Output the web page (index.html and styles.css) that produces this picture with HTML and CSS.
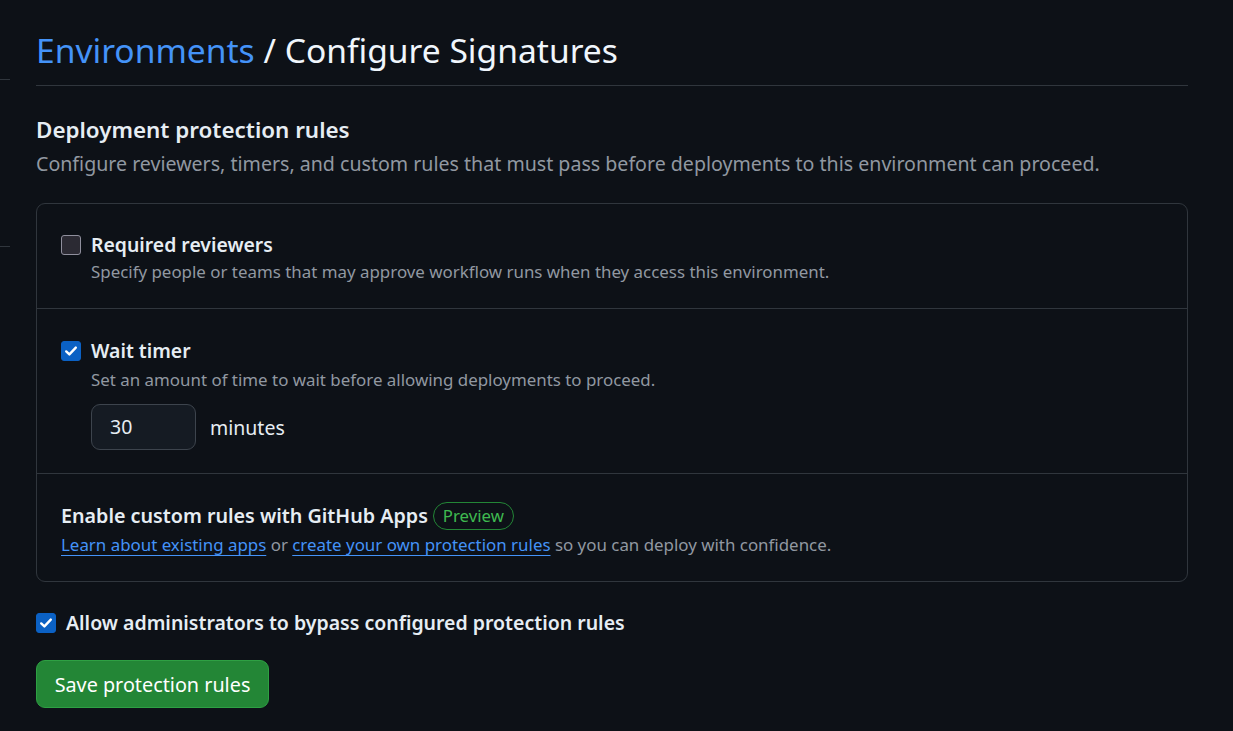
FILE: index.html
```html
<!DOCTYPE html>
<html lang="en">
<head>
<meta charset="utf-8">
<title>Configure Signatures</title>
<link rel="stylesheet" href="styles.css">
</head>
<body>
<div class="layout">
  <aside class="sidebar">
    <div class="side-line first"></div>
    <div class="side-line second"></div>
  </aside>
  <main class="content">
    <h1 class="page-title"><a class="crumb" href="#">Environments</a> / Configure Signatures</h1>
    <section class="section">
      <h2 class="section-title">Deployment protection rules</h2>
      <p class="section-desc">Configure reviewers, timers, and custom rules that must pass before deployments to this environment can proceed.</p>
      <div class="box">
        <div class="row row-reviewers">
          <label class="check-line">
            <span class="cb"></span>
            <span class="check-label">Required reviewers</span>
          </label>
          <p class="note">Specify people or teams that may approve workflow runs when they access this environment.</p>
        </div>
        <div class="row row-timer">
          <label class="check-line">
            <span class="cb checked"><svg viewBox="0 0 16 16" width="16" height="16"><path d="M3.2 8.4 6.4 11.4 12.8 4.6" fill="none" stroke="#fff" stroke-width="2.4" stroke-linecap="round" stroke-linejoin="round"/></svg></span>
            <span class="check-label">Wait timer</span>
          </label>
          <p class="note note-timer">Set an amount of time to wait before allowing deployments to proceed.</p>
          <div class="timer">
            <div class="input">30</div>
            <span class="unit">minutes</span>
          </div>
        </div>
        <div class="row row-apps">
          <div class="apps-title">Enable custom rules with GitHub Apps <span class="label">Preview</span></div>
          <p class="apps-desc"><a href="#">Learn about existing apps</a> or <a href="#">create your own protection rules</a> so you can deploy with confidence.</p>
        </div>
      </div>
      <label class="check-line admin">
        <span class="cb checked"><svg viewBox="0 0 16 16" width="16" height="16"><path d="M3.2 8.4 6.4 11.4 12.8 4.6" fill="none" stroke="#fff" stroke-width="2.4" stroke-linecap="round" stroke-linejoin="round"/></svg></span>
        <span class="check-label admin-label">Allow administrators to bypass configured protection rules</span>
      </label>
      <button class="btn" type="button">Save protection rules</button>
    </section>
  </main>
</div>
</body>
</html>
```

FILE: styles.css
```css
* { box-sizing: border-box; }
html, body { margin: 0; padding: 0; }
body {
  background: #0d1117;
  color: #e6edf3;
  font-family: "Noto Sans", "Open Sans", sans-serif;
  width: 1233px;
  height: 731px;
  overflow: hidden;
}
.layout {
  display: flex;
  gap: 26px;
}
.sidebar {
  width: 10px;
  flex: none;
}
.side-line {
  height: 1px;
  background: #30363d;
}
.side-line.first { margin-top: 79px; }
.side-line.second { margin-top: 166px; }
.content {
  width: 1152px;
  flex: none;
  padding-top: 26px;
}
.page-title {
  margin: 0;
  font-weight: 400;
  font-size: 33.6px;
  line-height: 48px;
  padding-bottom: 11px;
  border-bottom: 1px solid #30363d;
  color: #f0f6fc;
}
.crumb {
  color: #4493f8;
  text-decoration: none;
}
.section-title {
  margin: 29px 0 0;
  font-size: 22.4px;
  line-height: 30px;
  font-weight: 600;
}
.section-desc {
  margin: 4px 0 0;
  font-size: 19.6px;
  line-height: 30px;
  color: #9198a1;
}
.box {
  margin-top: 24px;
  border: 1px solid #30363d;
  border-radius: 9px;
}
.row {
  padding: 25px 24px 24px;
  border-top: 1px solid #30363d;
}
.row:first-child { border-top: 0; }
.row-reviewers { padding: 28px 24px 23px; }
.check-line {
  display: flex;
  align-items: center;
  gap: 10px;
}
.cb {
  width: 20px;
  height: 20px;
  flex: none;
  border-radius: 3px;
  background: #2b2a33;
  border: 1px solid #8f8f9d;
  display: flex;
  align-items: center;
  justify-content: center;
}
.cb.checked {
  background: #0b61c4;
  border-color: #0b61c4;
}
.check-label {
  font-size: 19.4px;
  line-height: 26px;
  font-weight: 600;
}
.note {
  margin: 1px 0 0 30px;
  font-size: 16.9px;
  line-height: 26px;
  color: #9198a1;
}
.row-timer { padding: 29px 24px 23px; }
.note-timer { margin-top: 3px; }
.timer {
  margin: 11px 0 0 30px;
  display: flex;
  align-items: center;
  gap: 14px;
}
.input {
  width: 105px;
  height: 46px;
  border: 1px solid #3d444d;
  border-radius: 9px;
  background: #151b23;
  padding: 0 18px;
  font-size: 19.5px;
  line-height: 44px;
}
.unit {
  font-size: 19.5px;
}
.row-apps { padding: 27px 24px 22px; }
.apps-title {
  font-size: 19.7px;
  line-height: 30px;
  font-weight: 600;
  display: flex;
  align-items: center;
  gap: 5px;
}
.label {
  font-size: 16.8px;
  font-weight: 400;
  line-height: 26px;
  color: #3fb950;
  border: 1px solid #238636;
  border-radius: 14px;
  padding: 0 9px;
}
.apps-desc {
  margin: 0;
  font-size: 16.9px;
  line-height: 28px;
  color: #9198a1;
}
.apps-desc a {
  color: #4493f8;
  text-decoration: underline;
  text-underline-offset: 4px;
}
.check-line.admin {
  margin-top: 28px;
}
.admin-label { font-size: 19.5px; }
.btn {
  margin-top: 24px;
  display: block;
  width: 233px;
  height: 48px;
  background: #238636;
  border: 1px solid #2ea043;
  border-radius: 9px;
  color: #fff;
  font-family: inherit;
  font-size: 19.8px;
  padding: 0;
}
```
